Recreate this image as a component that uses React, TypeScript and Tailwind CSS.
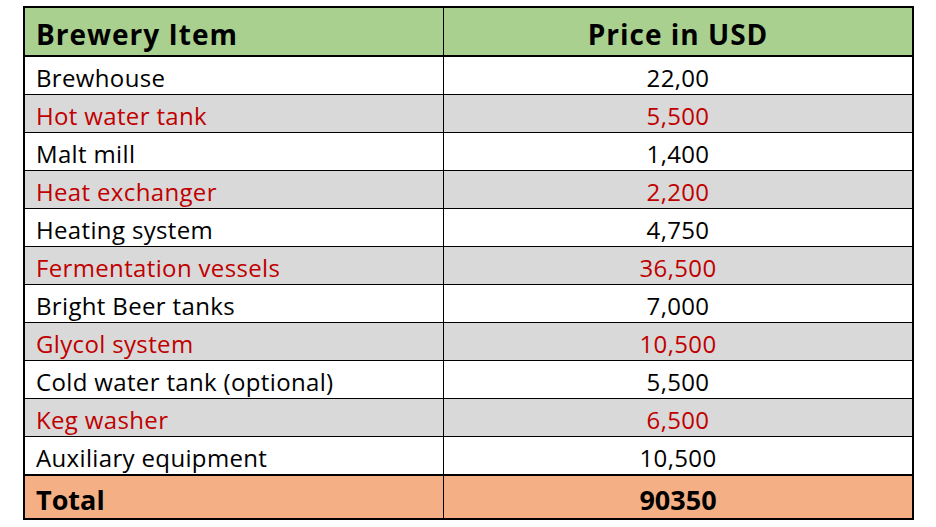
const rows: { item: string; price: string; shaded: boolean }[] = [
  { item: "Brewhouse", price: "22,00", shaded: false },
  { item: "Hot water tank", price: "5,500", shaded: true },
  { item: "Malt mill", price: "1,400", shaded: false },
  { item: "Heat exchanger", price: "2,200", shaded: true },
  { item: "Heating system", price: "4,750", shaded: false },
  { item: "Fermentation vessels", price: "36,500", shaded: true },
  { item: "Bright Beer tanks", price: "7,000", shaded: false },
  { item: "Glycol system", price: "10,500", shaded: true },
  { item: "Cold water tank (optional)", price: "5,500", shaded: false },
  { item: "Keg washer", price: "6,500", shaded: true },
  { item: "Auxiliary equipment", price: "10,500", shaded: false },
];

export default function App() {
  return (
    <div className="h-[527px] w-[936px] bg-white pl-[23px] pt-[6px] font-['Open_Sans',sans-serif]">
      <div className="w-[891px] border-2 border-black">
        {/* Header */}
        <div className="grid h-[49px] grid-cols-[419px_1fr] border-b-2 border-black bg-[#a9d08e] text-[28px] font-bold leading-none tracking-[1px] text-black">
          <div className="flex items-end border-r border-black pb-[7px] pl-[11px]">Brewery Item</div>
          <div className="flex items-end justify-center pb-[7px]">Price in USD</div>
        </div>

        {/* Items */}
        {rows.map((r, i) => (
          <div
            key={r.item}
            className={`grid h-[38px] grid-cols-[419px_1fr] text-[24px] leading-none tracking-[0.35px] ${
              i < rows.length - 1 ? "border-b border-black" : "border-b-2 border-black h-[39px]"
            } ${r.shaded ? "bg-[#d9d9d9] text-[#c00000]" : "bg-white text-black"}`}
          >
            <div className="flex items-end border-r border-black pb-[4px] pl-[11px]">{r.item}</div>
            <div className="flex items-end justify-center pb-[4px]">{r.price}</div>
          </div>
        ))}

        {/* Total */}
        <div className="grid h-[42px] grid-cols-[419px_1fr] bg-[#f4b084] text-[27px] font-bold leading-none text-black">
          <div className="flex items-end border-r border-black pb-[5px] pl-[11px]">Total</div>
          <div className="flex items-end justify-center pb-[5px]">90350</div>
        </div>
      </div>
    </div>
  );
}
